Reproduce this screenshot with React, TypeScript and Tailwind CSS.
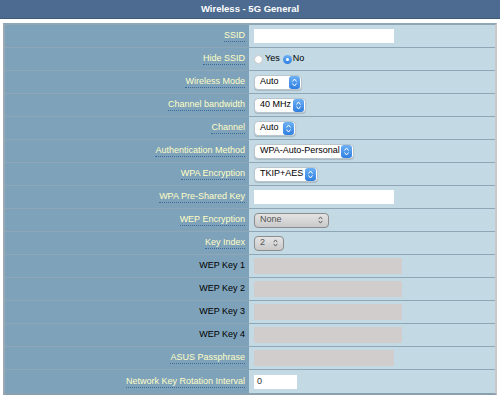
import React from 'react'

type Row = {
    label: string
    help?: boolean
    control: React.ReactNode
}

function Stepper() {
    return (
        <span className="ml-auto flex h-[13px] w-[11px] items-center justify-center rounded-[3px] bg-gradient-to-b from-[#6cb0f5] to-[#2f7fe0]">
            <svg width="5" height="9" viewBox="0 0 5 9">
                <path d="M0.5 3.5 L2.5 1 L4.5 3.5" fill="none" stroke="white" strokeWidth="1" />
                <path d="M0.5 5.5 L2.5 8 L4.5 5.5" fill="none" stroke="white" strokeWidth="1" />
            </svg>
        </span>
    )
}

function Select({ value, width }: { value: string; width: string }) {
    return (
        <div className={`flex h-[15px] items-center whitespace-nowrap rounded-[4px] border border-[#b9c4cc] bg-white pl-[5px] pr-[1px] text-[9px] text-black shadow-[0_1px_1px_rgba(0,0,0,0.15)] ${width}`}>
            <span>{value}</span>
            <Stepper />
        </div>
    )
}

function DisabledSelect({ value, width }: { value: string; width: string }) {
    return (
        <div className={`flex h-[15px] items-center whitespace-nowrap rounded-[4px] border border-[#8c8c8c] bg-gradient-to-b from-[#e4e4e4] to-[#c9c9c9] pl-[5px] pr-[5px] text-[9px] text-[#555] ${width}`}>
            <span>{value}</span>
            <svg className="ml-auto" width="5" height="8" viewBox="0 0 5 9">
                <path d="M0.5 3.5 L2.5 1 L4.5 3.5" fill="none" stroke="#555" strokeWidth="1" />
                <path d="M0.5 5.5 L2.5 8 L4.5 5.5" fill="none" stroke="#555" strokeWidth="1" />
            </svg>
        </div>
    )
}

function TextInput({ width, value }: { width: string; value?: string }) {
    return (
        <div className={`flex h-[14px] items-center bg-white px-[3px] text-[9px] text-[#333] ${width}`}>
            {value}
        </div>
    )
}

function DisabledInput({ width }: { width: string }) {
    return <div className={`h-[16px] bg-[#d2cdcd] ${width}`} />
}

const rows: Row[] = [
    { label: 'SSID', help: true, control: <TextInput width="w-[140px]" /> },
    {
        label: 'Hide SSID',
        help: true,
        control: (
            <div className="flex items-center text-[9px] text-black">
                <span className="h-[9px] w-[9px] rounded-full border border-[#c8c8c8] bg-white" />
                <span className="ml-[2px]">Yes</span>
                <span className="ml-[3px] flex h-[9px] w-[9px] items-center justify-center rounded-full bg-gradient-to-b from-[#6cb0f5] to-[#2f7fe0]">
                    <span className="h-[3px] w-[3px] rounded-full bg-white" />
                </span>
                <span className="ml-[1px]">No</span>
            </div>
        ),
    },
    { label: 'Wireless Mode', help: true, control: <Select value="Auto" width="w-[48px]" /> },
    { label: 'Channel bandwidth', help: true, control: <Select value="40 MHz" width="w-[52px]" /> },
    { label: 'Channel', help: true, control: <Select value="Auto" width="w-[42px]" /> },
    { label: 'Authentication Method', help: true, control: <Select value="WPA-Auto-Personal" width="w-[100px]" /> },
    { label: 'WPA Encryption', help: true, control: <Select value="TKIP+AES" width="w-[64px]" /> },
    { label: 'WPA Pre-Shared Key', help: true, control: <TextInput width="w-[140px]" /> },
    { label: 'WEP Encryption', help: true, control: <DisabledSelect value="None" width="w-[75px]" /> },
    { label: 'Key Index', help: true, control: <DisabledSelect value="2" width="w-[30px]" /> },
    { label: 'WEP Key 1', control: <DisabledInput width="w-[148px]" /> },
    { label: 'WEP Key 2', control: <DisabledInput width="w-[148px]" /> },
    { label: 'WEP Key 3', control: <DisabledInput width="w-[148px]" /> },
    { label: 'WEP Key 4', control: <DisabledInput width="w-[148px]" /> },
    { label: 'ASUS Passphrase', help: true, control: <DisabledInput width="w-[140px]" /> },
    { label: 'Network Key Rotation Interval', help: true, control: <TextInput width="w-[43px]" value="0" /> },
]

export default function App() {
    return (
        <div className="h-[399px] w-[500px] overflow-hidden bg-white font-['Liberation_Sans',Arial,sans-serif]">
            {/* Header */}
            <div className="flex h-[19px] items-center justify-center border-b border-[#3f5b7c] bg-[#4d6b90] text-[9.5px] font-bold text-white">
                Wireless - 5G General
            </div>

            {/* Settings table */}
            <div className="mx-[3px] mt-[4px] border-l-2 border-t-2 border-r-2 border-b-2 border-l-[#9aa9b3] border-t-[#8fa6b5] border-r-[#c9c9c9] border-b-[#8aa0ae] bg-[#c3d9e4]">
                {rows.map((row) => (
                    <div key={row.label} className="flex h-[23px] border-b border-[#8fa6b6] last:border-b-0">
                        <div className="flex w-[244px] items-center justify-end bg-[#7ea2ba] pr-[4px] text-[9px]">
                            {row.help ? (
                                <span className="border-b border-dotted border-[#3b6c9a] leading-[11px] text-[#ffffc6]">
                                    {row.label}
                                </span>
                            ) : (
                                <span className="text-black">{row.label}</span>
                            )}
                        </div>
                        <div className="flex flex-1 items-center pl-[5px]">{row.control}</div>
                    </div>
                ))}
            </div>
        </div>
    )
}
